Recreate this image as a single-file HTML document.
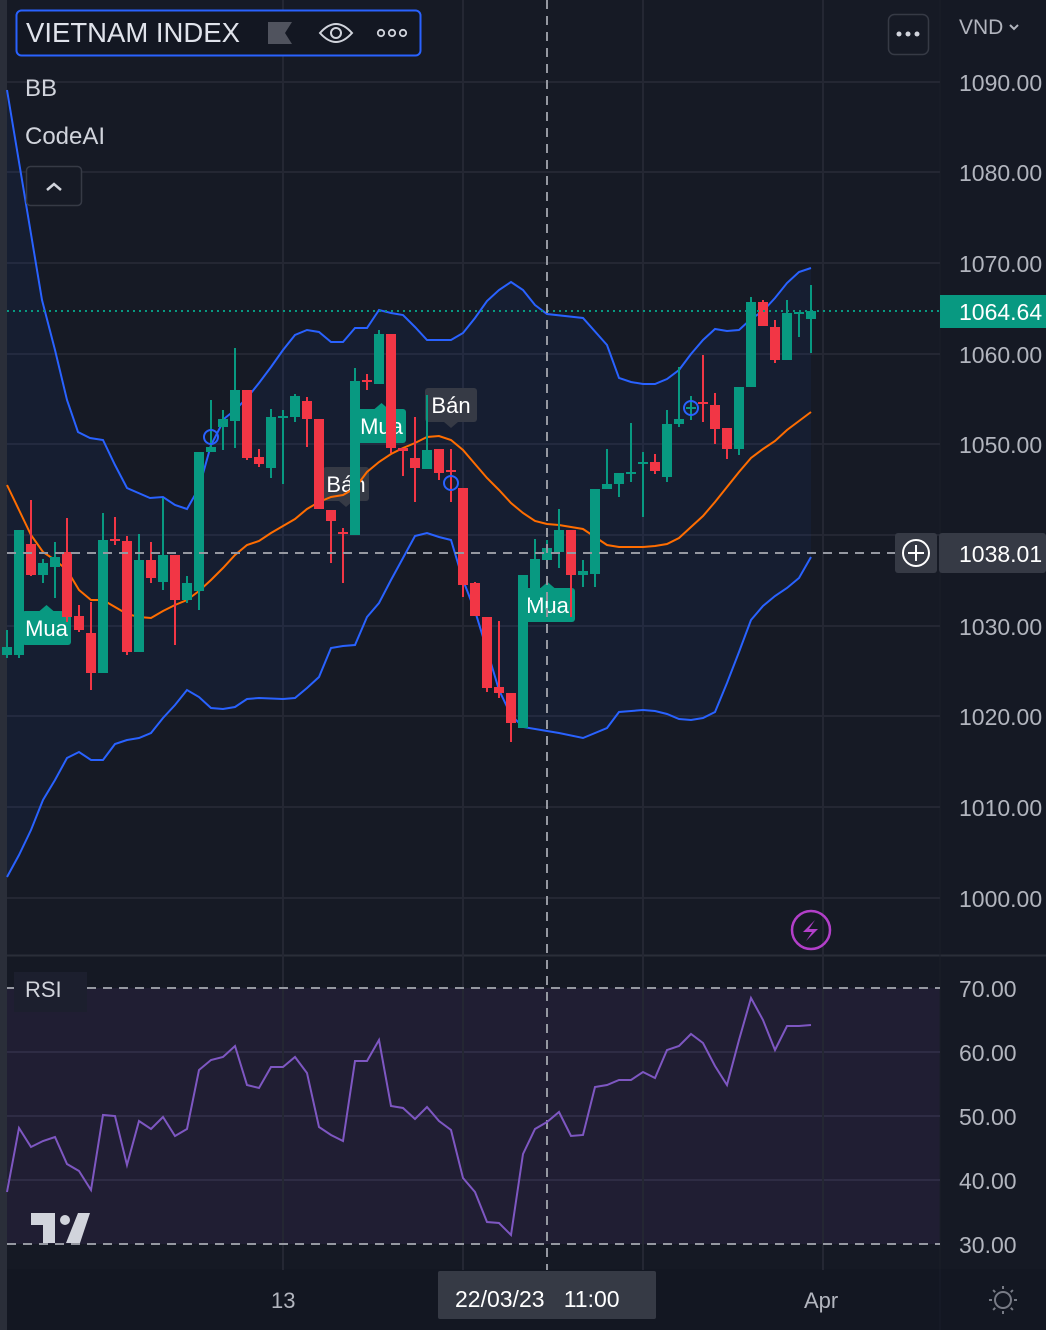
<!DOCTYPE html>
<html><head><meta charset="utf-8"><style>
html,body{margin:0;padding:0;background:#151924;}
body{width:1046px;height:1330px;overflow:hidden;position:relative;font-family:"Liberation Sans",sans-serif;}
svg{position:absolute;left:0;top:0;}
.t{position:absolute;color:#d1d4dc;white-space:nowrap;}
.ax{position:absolute;color:#b2b5be;font-size:23px;left:959px;}
</style></head><body>
<svg id="s" width="1046" height="1330" xmlns="http://www.w3.org/2000/svg"></svg>
<div class="t" style="left:26px;top:17px;font-size:27.5px;color:#e0e3eb">VIETNAM INDEX</div>
<div class="t" style="left:25px;top:75px;font-size:24px">BB</div>
<div class="t" style="left:25px;top:123px;font-size:24px">CodeAI</div>
<div class="t" style="left:959px;top:16px;font-size:21px;color:#b2b5be">VND</div>
<div class="ax" style="top:70px">1090.00</div>
<div class="ax" style="top:160px">1080.00</div>
<div class="ax" style="top:251px">1070.00</div>
<div class="ax" style="top:342px">1060.00</div>
<div class="ax" style="top:432px">1050.00</div>
<div class="ax" style="top:614px">1030.00</div>
<div class="ax" style="top:704px">1020.00</div>
<div class="ax" style="top:795px">1010.00</div>
<div class="ax" style="top:886px">1000.00</div>
<div class="ax" style="top:976px">70.00</div>
<div class="ax" style="top:1040px">60.00</div>
<div class="ax" style="top:1104px">50.00</div>
<div class="ax" style="top:1168px">40.00</div>
<div class="ax" style="top:1232px">30.00</div>
<div class="t" style="left:959px;top:299px;font-size:23px;color:#fff">1064.64</div>
<div class="t" style="left:959px;top:541px;font-size:23px;color:#fff">1038.01</div>
<div class="t" style="left:271px;top:1288px;font-size:22px;color:#b2b5be">13</div>
<div class="t" style="left:804px;top:1288px;font-size:22px;color:#b2b5be">Apr</div>
<div class="t" style="left:455px;top:1286px;font-size:23px;color:#fff">22/03/23 &nbsp; 11:00</div>
<div class="t" style="left:25px;top:977px;font-size:22px">RSI</div>
<script>
const S=document.getElementById('s');let h='';
const P=a=>a.map(p=>p.join(',')).join(' ');
h+='<rect x="0" y="0" width="1046" height="1330" fill="#151924"/>';
h+='<rect x="0" y="0" width="7" height="1330" fill="#2a2e39"/>';
h+='<rect x="7" y="0" width="933" height="955" fill="#161a25"/>';
h+='<rect x="7" y="988" width="933" height="256" fill="#201e33"/>';
h+='<rect x="7" y="1269" width="1039" height="61" fill="#131722"/>';
h+='<line x1="0" y1="955.5" x2="1046" y2="955.5" stroke="#2a2e39" stroke-width="2"/>';
h+='<line x1="940" y1="0" x2="940" y2="1330" stroke="#1a1e29"/>';
[82,172,263,354,444,535,626,716,807,898].forEach(y=>h+=`<line x1="7" y1="${y}" x2="940" y2="${y}" stroke="#242733" stroke-width="2"/>`);
[1052,1116,1180].forEach(y=>h+=`<line x1="7" y1="${y}" x2="940" y2="${y}" stroke="#2e2c44" stroke-width="2"/>`);
[283,463,643,823].forEach(x=>h+=`<line x1="${x}" y1="0" x2="${x}" y2="1270" stroke="#242733" stroke-width="2"/>`);
const U=[[7,90],[22,180],[42,300],[55,350],[67,400],[78,432],[90,438],[103,440],[115,465],[127,488],[150,498],[163,497],[175,505],[187,509],[199,488],[211,445],[225,418],[235,410],[247,398],[259,383],[271,367],[283,350],[295,335],[307,330],[319,332],[331,342],[343,342],[355,328],[367,328],[379,310],[391,313],[403,315],[415,327],[427,340],[439,340],[451,340],[463,333],[475,318],[487,301],[499,290],[511,282],[523,290],[535,305],[547,314],[583,318],[607,345],[619,378],[631,382],[643,384],[655,384],[667,379],[679,370],[691,354],[703,340],[715,329],[727,331],[739,330],[751,319],[763,311],[775,298],[787,283],[799,272],[811,268]];
const M=[[7,485],[19,510],[31,535],[43,552],[55,560],[67,570],[79,590],[91,600],[103,600],[115,607],[127,614],[139,617],[151,618],[163,611],[175,605],[187,600],[199,591],[211,580],[223,568],[235,555],[247,545],[259,541],[271,533],[283,526],[295,519],[307,509],[319,502],[331,497],[343,495],[355,488],[367,472],[379,462],[391,454],[403,448],[415,443],[427,437],[439,436],[451,440],[463,450],[475,464],[487,478],[499,490],[511,503],[523,513],[535,521],[547,524],[559,525],[583,529],[595,537],[607,545],[619,547],[631,547],[643,547],[655,546],[667,544],[679,538],[691,527],[703,516],[715,502],[727,487],[739,472],[751,458],[763,449],[775,441],[787,430],[799,421],[811,412]];
const L=[[7,877],[19,855],[31,830],[43,800],[55,780],[67,758],[79,752],[91,760],[103,760],[115,744],[127,740],[139,738],[151,733],[163,718],[175,705],[187,690],[199,697],[211,708],[223,709],[235,707],[247,699],[259,698],[283,699],[295,698],[307,688],[319,677],[331,648],[343,646],[355,645],[367,617],[379,603],[391,580],[403,558],[415,536],[427,533],[439,537],[451,540],[463,580],[475,611],[487,650],[499,690],[511,715],[523,727],[547,731],[559,733],[583,738],[607,728],[619,712],[643,710],[655,711],[667,714],[679,719],[691,720],[703,718],[715,712],[727,683],[739,652],[751,620],[763,606],[775,596],[787,588],[799,578],[811,557]];
h+=`<polygon points="${P(U)} ${P(L.slice().reverse())}" fill="#2962ff" fill-opacity="0.06"/>`;
function lab(x,y,w,t,c,up){let ax=x+w/2;h+=`<rect x="${x}" y="${y}" width="${w}" height="34" rx="3" fill="${c}"/>`;
 h+= up?`<polygon points="${ax-7},${y} ${ax+7},${y} ${ax},${y-6}" fill="${c}"/>`:`<polygon points="${ax-7},${y+34} ${ax+7},${y+34} ${ax},${y+40}" fill="${c}"/>`;
 h+=`<text x="${x+w/2}" y="${y+25}" text-anchor="middle" font-family="Liberation Sans,sans-serif" font-size="22" fill="#fff">${t}</text>`;}
lab(22,611,49,'Mua','#089981',1);lab(357,409,49,'Mua','#089981',1);lab(520,588,55,'Mua','#089981',1);
lab(323,467,46,'Bán','#363a45',0);lab(425,388,52,'Bán','#363a45',0);
h+=`<polyline points="${P(U)}" fill="none" stroke="#2962ff" stroke-width="2"/>`;
h+=`<polyline points="${P(L)}" fill="none" stroke="#2962ff" stroke-width="2"/>`;
h+=`<polyline points="${P(M)}" fill="none" stroke="#ff6d00" stroke-width="2"/>`;
const G='#089981',R='#f23645';
const C=[[7,647,655,630,658,G],[19,530,655,530,658,G],[31,544,575,500,576,R],[43,563,575,559,583,G],[55,557,567,542,598,G],[67,552,617,518,622,R],[79,616,630,605,632,R],[91,633,673,602,690,R],[103,540,673,513,673,G],[115,539,541,517,545,R],[127,541,652,536,655,R],[139,560,652,534,652,G],[151,560,578,542,583,R],[163,555,582,498,590,G],[175,555,600,555,645,R],[187,583,600,576,603,G],[199,452,591,452,610,G],[211,447,452,400,452,G],[223,419,427,410,450,G],[235,390,421,348,448,G],[247,390,458,390,460,R],[259,457,464,449,467,R],[271,417,468,409,478,G],[283,416,418,410,484,G],[295,396,417,394,422,G],[307,401,419,397,447,R],[319,419,509,419,509,R],[331,510,521,510,563,R],[343,532,534,528,583,R],[355,381,535,368,535,G],[367,380,382,374,390,R],[379,334,384,330,384,G],[391,334,448,334,453,R],[403,448,451,448,476,R],[415,458,468,417,502,R],[427,450,469,395,469,G],[439,449,473,449,480,R],[451,470,472,449,502,R],[463,488,585,488,597,R],[475,583,616,582,616,R],[487,617,688,617,692,R],[499,687,693,621,698,R],[511,693,723,693,742,R],[523,575,728,575,728,G],[535,559,600,539,600,G],[547,548,560,540,565,G],[559,530,552,509,568,G],[571,530,575,530,617,R],[583,571,575,560,587,G],[595,489,574,489,587,G],[607,484,489,449,489,G],[619,473,484,473,497,G],[631,472,474,423,482,G],[643,462,464,452,517,G],[655,462,471,454,474,R],[667,424,477,410,482,G],[679,419,424,367,427,G],[691,407,409,396,420,G],[703,402,404,355,422,R],[715,405,429,393,444,R],[727,428,449,428,459,R],[739,387,449,387,455,G],[751,302,387,297,387,G],[763,302,326,300,326,R],[775,327,360,320,363,R],[787,313,360,300,360,G],[799,312,314,313,337,G],[811,311,319,285,353,G]];
C.forEach(c=>{h+=`<line x1="${c[0]}" y1="${c[3]}" x2="${c[0]}" y2="${c[4]}" stroke="${c[5]}" stroke-width="2"/>`;h+=`<rect x="${c[0]-5}" y="${c[1]}" width="10" height="${Math.max(2,c[2]-c[1])}" fill="${c[5]}"/>`;});
[[211,437],[451,483],[691,408]].forEach(p=>h+=`<circle cx="${p[0]}" cy="${p[1]}" r="7" fill="none" stroke="#2962ff" stroke-width="2"/>`);
h+='<line x1="7" y1="311" x2="940" y2="311" stroke="#089981" stroke-width="2" stroke-dasharray="2,4"/>';
h+='<line x1="7" y1="553" x2="895" y2="553" stroke="#9598a1" stroke-width="2" stroke-dasharray="9,7"/>';
h+='<line x1="547" y1="0" x2="547" y2="1270" stroke="#9598a1" stroke-width="2" stroke-dasharray="9,7"/>';
h+='<line x1="7" y1="988" x2="940" y2="988" stroke="#9598a1" stroke-width="2" stroke-dasharray="9,7"/>';
h+='<line x1="7" y1="1244" x2="940" y2="1244" stroke="#9598a1" stroke-width="2" stroke-dasharray="9,7"/>';
h+='<rect x="940" y="295" width="106" height="33" fill="#089981"/>';
h+='<rect x="939" y="533" width="107" height="40" rx="3" fill="#363a45"/>';
h+='<rect x="895" y="533" width="42" height="40" rx="3" fill="#363a45"/>';
h+='<circle cx="916" cy="553" r="13" fill="none" stroke="#fff" stroke-width="2"/><path d="M916 545v16M908 553h16" stroke="#fff" stroke-width="2"/>';
const Rs=[[7,1192],[19,1128],[31,1147],[43,1141],[55,1137],[67,1164],[79,1171],[91,1190],[103,1115],[115,1116],[127,1165],[139,1121],[151,1129],[163,1117],[175,1136],[187,1129],[199,1070],[211,1060],[223,1057],[235,1046],[247,1085],[259,1088],[271,1067],[283,1067],[295,1057],[307,1073],[319,1127],[331,1135],[343,1141],[355,1061],[367,1061],[379,1040],[391,1106],[403,1108],[415,1119],[427,1107],[439,1121],[451,1130],[463,1178],[475,1192],[487,1222],[499,1223],[511,1235],[523,1154],[535,1129],[547,1122],[559,1112],[571,1136],[583,1135],[595,1087],[607,1085],[619,1080],[631,1080],[643,1072],[655,1078],[667,1050],[679,1046],[691,1034],[703,1043],[715,1066],[727,1085],[739,1040],[751,998],[763,1020],[775,1050],[787,1026],[799,1026],[811,1025]];
h+=`<polyline points="${P(Rs)}" fill="none" stroke="#7e57c2" stroke-width="2"/>`;
h+='<rect x="14" y="972" width="73" height="40" fill="#1c1f2e"/>';
h+='<rect x="16.5" y="10.5" width="404" height="45" rx="5" fill="#131722" stroke="#2962ff" stroke-width="2"/>';
h+='<polygon points="268,22 292,22 285,33 292,44 268,44" fill="#50535e"/>';
h+='<path d="M320 33Q336 15 352 33Q336 51 320 33Z" fill="none" stroke="#d1d4dc" stroke-width="2"/><circle cx="336" cy="33" r="5" fill="none" stroke="#d1d4dc" stroke-width="2"/>';
[381,392,403].forEach(x=>h+=`<circle cx="${x}" cy="33" r="3.2" fill="none" stroke="#d1d4dc" stroke-width="1.8"/>`);
h+='<rect x="26.5" y="166.5" width="55" height="39" rx="4" fill="#161a25" stroke="#363a45" stroke-width="1.5"/><path d="M47 190l7-6 7 6" fill="none" stroke="#d1d4dc" stroke-width="2.5"/>';
h+='<rect x="888.5" y="14.5" width="40" height="40" rx="6" fill="#161a25" stroke="#363a45" stroke-width="1.5"/>';
[899,908,917].forEach(x=>h+=`<circle cx="${x}" cy="34" r="2.5" fill="#d1d4dc"/>`);
h+='<path d="M1010 25l4 4 4-4" fill="none" stroke="#b2b5be" stroke-width="2"/>';
h+='<circle cx="811" cy="930" r="19" fill="none" stroke="#b23fc9" stroke-width="2.5"/><path d="M815 920L803 932h9l-6 9 12-12h-9z" fill="#b23fc9"/>';
h+='<path d="M31 1213h24v30h-12v-18h-12z" fill="#d1d4dc"/><circle cx="65" cy="1220" r="5" fill="#d1d4dc"/><polygon points="78,1213 90,1213 80,1243 66,1243" fill="#d1d4dc"/>';
h+='<rect x="438" y="1271" width="218" height="48" rx="2" fill="#363a45"/>';
h+='<circle cx="1003" cy="1300" r="8" fill="none" stroke="#787b86" stroke-width="2"/>';
[0,45,90,135,180,225,270,315].forEach(a=>{let r=a*Math.PI/180;h+=`<line x1="${1003+11*Math.cos(r)}" y1="${1300+11*Math.sin(r)}" x2="${1003+14*Math.cos(r)}" y2="${1300+14*Math.sin(r)}" stroke="#787b86" stroke-width="2"/>`;});
S.innerHTML=h;
</script>
</body></html>
